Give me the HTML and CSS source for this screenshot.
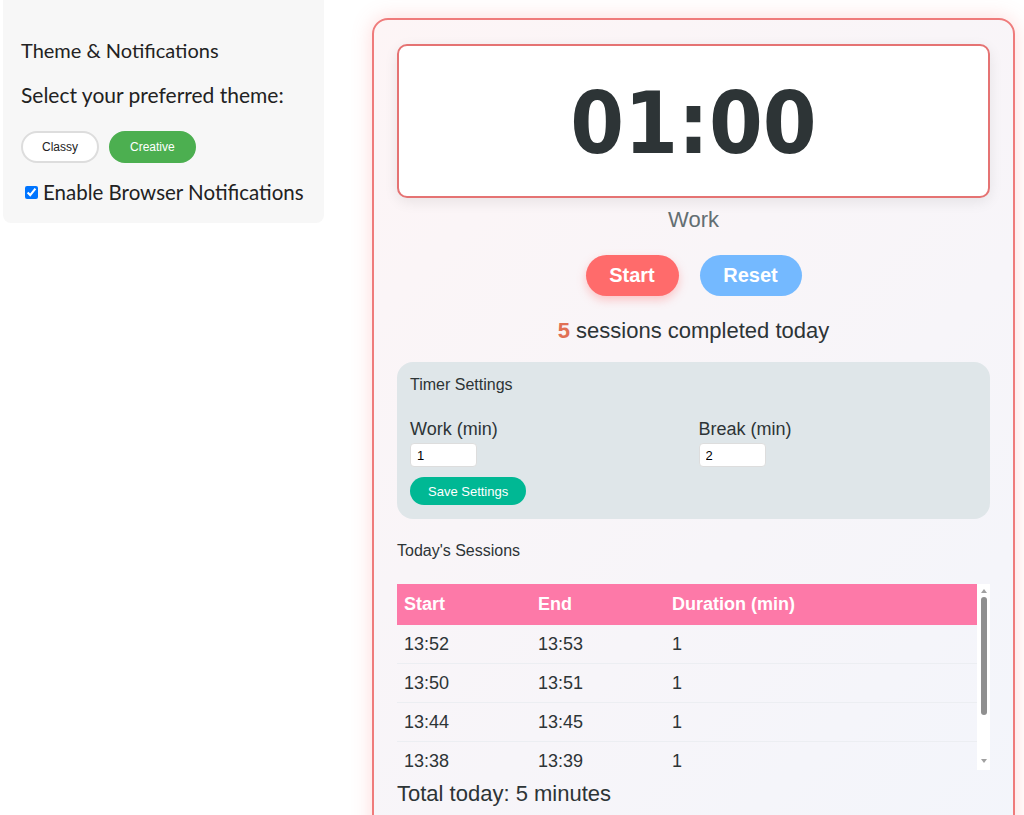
FILE: index.html
```html
<!DOCTYPE html>
<html lang="en">
<head>
    <meta charset="UTF-8">
    <meta name="viewport" content="width=device-width, initial-scale=1.0">
    <title>Focus Timer</title>
    <link rel="stylesheet" href="styles.css">
</head>
<body>
    <!-- theme + notification panel -->
    <aside class="side-panel">
        <h3>Theme &amp; Notifications</h3>
        <p>Select your preferred theme:</p>
        <div class="theme-buttons">
            <button class="theme-btn">Classy</button>
            <button class="theme-btn active">Creative</button>
        </div>
        <label class="notify">
            <input type="checkbox" checked>
            <span>Enable Browser Notifications</span>
        </label>
    </aside>

    <!-- main timer card -->
    <main class="container">
        <div class="timer-display">01:00</div>
        <div class="mode">Work</div>

        <div class="controls">
            <button class="btn start">Start</button>
            <button class="btn reset">Reset</button>
        </div>

        <div class="counter"><strong>5</strong> sessions completed today</div>

        <div class="settings">
            <h4>Timer Settings</h4>
            <div class="settings-grid">
                <div class="field">
                    <label>Work (min)</label>
                    <input type="number" value="1">
                </div>
                <div class="field">
                    <label>Break (min)</label>
                    <input type="number" value="2">
                </div>
            </div>
            <button class="save-btn">Save Settings</button>
        </div>

        <h4 class="log-title">Today's Sessions</h4>
        <div class="log">
            <div class="log-body">
                <table>
                    <thead>
                        <tr><th>Start</th><th>End</th><th>Duration (min)</th></tr>
                    </thead>
                    <tbody>
                        <tr><td>13:52</td><td>13:53</td><td>1</td></tr>
                        <tr><td>13:50</td><td>13:51</td><td>1</td></tr>
                        <tr><td>13:44</td><td>13:45</td><td>1</td></tr>
                        <tr><td>13:38</td><td>13:39</td><td>1</td></tr>
                    </tbody>
                </table>
            </div>
            <!-- scrollbar for the log list -->
            <div class="scrollbar">
                <span class="arrow up"></span>
                <span class="thumb"></span>
                <span class="arrow down"></span>
            </div>
        </div>
        <div class="total">Total today: 5 minutes</div>
    </main>
</body>
</html>
```

FILE: styles.css
```css
/* base */
body {
    margin: 0;
    padding: 0 3px;
    display: flex;
    align-items: flex-start;
    gap: 48px;
    font-family: 'Liberation Sans', Arial, sans-serif;
    background: #ffffff;
    color: #2d3436;
    height: 815px;
    overflow: hidden;
}

/* side panel */
.side-panel {
    width: 321px;
    box-sizing: border-box;
    background: #f7f7f7;
    border-radius: 0 0 8px 8px;
    padding: 38px 18px 19px;
    font-family: 'Lato', sans-serif;
    color: #222;
}
.side-panel h3 {
    margin: 0 0 22px;
    font-size: 20px;
    font-weight: 400;
    line-height: 24px;
}
.side-panel p {
    margin: 0 0 25px;
    font-size: 21px;
    line-height: 22px;
}
.theme-buttons {
    display: flex;
    gap: 10px;
    margin-bottom: 17px;
}
.theme-btn {
    font-family: 'Liberation Sans', Arial, sans-serif;
    font-size: 12px;
    height: 32px;
    padding: 0 19px;
    border: 2px solid #ddd;
    border-radius: 20px;
    background: #fff;
    color: #222;
}
.theme-btn.active {
    background: #4caf50;
    border-color: #4caf50;
    color: #fff;
}
.notify {
    display: flex;
    align-items: center;
    gap: 5px;
    font-size: 20.5px;
    line-height: 24px;
    white-space: nowrap;
    padding-left: 4px;
}
.notify input {
    margin: 0;
    width: 13px;
    height: 13px;
}

/* timer card */
.container {
    width: 643px;
    box-sizing: border-box;
    margin-top: 18px;
    padding: 24px 23px 0;
    min-height: 830px;
    border: 2px solid #ef7b7b;
    border-radius: 16px;
    background: linear-gradient(135deg, #fdf5f6, #f3f5fb);
    box-shadow: 0 0 20px rgba(255, 107, 107, 0.25);
}
.timer-display {
    height: 154px;
    box-sizing: border-box;
    display: flex;
    align-items: center;
    justify-content: center;
    padding-top: 4px;
    background: #fff;
    border: 2px solid #e57373;
    border-radius: 10px;
    box-shadow: 0 4px 14px rgba(0, 0, 0, 0.08);
    font-family: 'DejaVu Sans Condensed', 'DejaVu Sans', sans-serif;
    font-stretch: condensed;
    font-weight: bold;
    font-size: 86px;
    color: #2d3436;
}
.mode {
    text-align: center;
    font-size: 22px;
    color: #636e72;
    margin: 9px 0 22px;
}
.controls {
    display: flex;
    justify-content: center;
    gap: 21px;
}
.btn {
    height: 41px;
    border: none;
    border-radius: 22px;
    font-family: inherit;
    font-size: 20px;
    font-weight: bold;
    color: #fff;
    cursor: pointer;
}
.btn.start {
    width: 93px;
    background: #ff6b6b;
    box-shadow: 0 4px 10px rgba(255, 107, 107, 0.35);
}
.btn.reset {
    width: 102px;
    background: #74b9ff;
}
.counter {
    text-align: center;
    font-size: 22px;
    margin: 22px 0 18px;
}
.counter strong {
    color: #e17055;
}

/* settings box */
.settings {
    background: #dfe6e9;
    border-radius: 16px;
    padding: 14px 13px 14px;
}
.settings h4 {
    margin: 0 0 25px;
    font-size: 16px;
    font-weight: normal;
}
.settings-grid {
    display: grid;
    grid-template-columns: 1fr 1fr;
    gap: 10px;
}
.field label {
    display: block;
    font-size: 18px;
    margin-bottom: 3px;
}
.field input {
    width: 67px;
    height: 24px;
    box-sizing: border-box;
    border: 1px solid #ddd;
    border-radius: 4px;
    padding: 0 6px;
    font-family: inherit;
    font-size: 13px;
}
.save-btn {
    display: block;
    margin-top: 10px;
    height: 28px;
    padding: 0 18px;
    border: none;
    border-radius: 15px;
    background: #00b894;
    color: #fff;
    font-family: inherit;
    font-size: 13px;
}

/* session log */
.log-title {
    margin: 23px 0 24px;
    font-size: 16px;
    font-weight: normal;
}
.log {
    display: flex;
    height: 186px;
}
.log-body {
    flex: 1;
    overflow: hidden;
}
.log table {
    width: 100%;
    border-collapse: collapse;
    font-size: 18px;
}
.log th {
    background: #fd79a8;
    color: #fff;
    text-align: left;
    height: 41px;
    padding: 0 7px;
}
.log td {
    height: 38px;
    padding: 0 7px;
    border-bottom: 1px solid #eceef2;
}
.log th:nth-child(1), .log th:nth-child(2) {
    width: 120px;
}
.scrollbar {
    width: 13px;
    background: #fff;
    display: flex;
    flex-direction: column;
    align-items: center;
    padding: 5px 0;
    box-sizing: border-box;
}
.scrollbar .thumb {
    width: 6px;
    height: 118px;
    margin: 4px 0 auto;
    border-radius: 3px;
    background: #8f8f8f;
}
.scrollbar .arrow {
    width: 0;
    height: 0;
    border-left: 3px solid transparent;
    border-right: 3px solid transparent;
}
.scrollbar .arrow.up {
    border-bottom: 4px solid #a0a0a0;
}
.scrollbar .arrow.down {
    border-top: 4px solid #a0a0a0;
    margin-bottom: 2px;
}
.total {
    font-size: 22px;
    margin-top: 11px;
}
```
